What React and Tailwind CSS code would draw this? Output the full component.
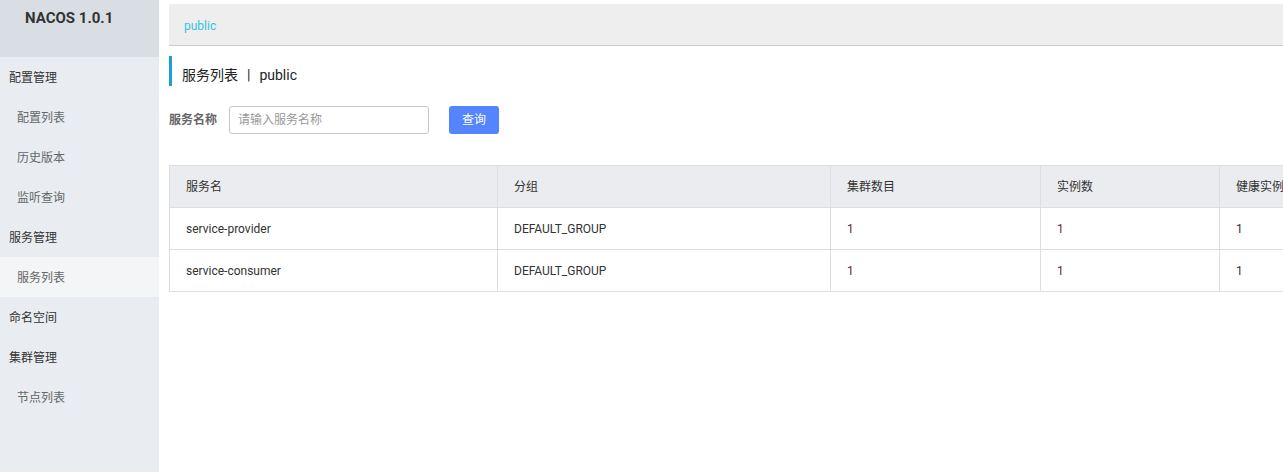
import React from "react";

const menu = [
  { label: "配置管理", group: true },
  { label: "配置列表" },
  { label: "历史版本" },
  { label: "监听查询" },
  { label: "服务管理", group: true },
  { label: "服务列表", active: true },
  { label: "命名空间", group: true },
  { label: "集群管理", group: true },
  { label: "节点列表" },
];

const columns = [
  { title: "服务名", width: "w-[328px]" },
  { title: "分组", width: "w-[333px]" },
  { title: "集群数目", width: "w-[210px]" },
  { title: "实例数", width: "w-[179px]" },
  { title: "健康实例数", width: "w-[200px]" },
];

const rows = [
  ["service-provider", "DEFAULT_GROUP", "1", "1", "1"],
  ["service-consumer", "DEFAULT_GROUP", "1", "1", "1"],
];

export default function App() {
  return (
    <div
      className="flex h-[472px] w-[1283px] overflow-hidden bg-white text-[#333]"
      style={{ fontFamily: 'Roboto, "Noto Sans CJK SC", sans-serif' }}
    >
      {/* 侧边栏 */}
      <aside className="w-[159px] shrink-0 bg-[#e9edf2]">
        <div className="h-[57px] bg-[#d9dee4] pl-[25px] pt-[7px] text-[15px] font-bold text-[#333]">
          NACOS 1.0.1
        </div>
        {menu.map((item) => (
          <div
            key={item.label}
            className={`flex h-10 items-center pt-[2px] text-xs ${
              item.group ? "pl-[9px] text-[#333]" : "pl-[17px] text-[#666]"
            } ${item.active ? "bg-[#f4f5f7]" : ""}`}
          >
            {item.label}
          </div>
        ))}
      </aside>

      {/* 主体 */}
      <main className="min-w-0 flex-1 pl-[10px] pt-1">
        <div className="flex h-[42px] items-center border-b border-[#cccccc] bg-[#eeeeee] pl-[15px] pt-[3px] text-xs text-[#33c3e0]">
          public
        </div>

        <div className="mt-[10px] flex h-[30px] items-center border-l-[3px] border-[#1a9fd6] pl-[10px] pt-[7px] text-sm text-[#222]">
          服务列表<span className="mx-[9px]">|</span>public
        </div>

        <div className="mt-5 flex items-center text-xs">
          <span className="w-[60px] font-bold text-[#666]">服务名称</span>
          <input
            className="h-7 w-[200px] rounded-[3px] border border-[#c4c6cf] px-2 text-xs outline-none placeholder:text-[#999]"
            placeholder="请输入服务名称"
          />
          <button className="ml-5 h-7 w-[50px] rounded-[3px] bg-[#5584ff] text-xs text-white">
            查询
          </button>
        </div>

        <table className="mt-[31px] w-max border-collapse text-xs">
          <thead>
            <tr className="h-[42px] bg-[#ebecf0] text-[#333]">
              {columns.map((c) => (
                <th
                  key={c.title}
                  className={`${c.width} border border-[#dcdee3] pl-4 text-left font-normal`}
                >
                  {c.title}
                </th>
              ))}
            </tr>
          </thead>
          <tbody>
            {rows.map((r) => (
              <tr key={r[0]} className="h-[42px]">
                {r.map((cell, i) => (
                  <td
                    key={i}
                    className={`border border-[#dcdee3] pl-4 ${
                      i === 2 || i === 3 ? "text-[#5a1f35]" : "text-[#333]"
                    }`}
                  >
                    {cell}
                  </td>
                ))}
              </tr>
            ))}
          </tbody>
        </table>
      </main>
    </div>
  );
}
